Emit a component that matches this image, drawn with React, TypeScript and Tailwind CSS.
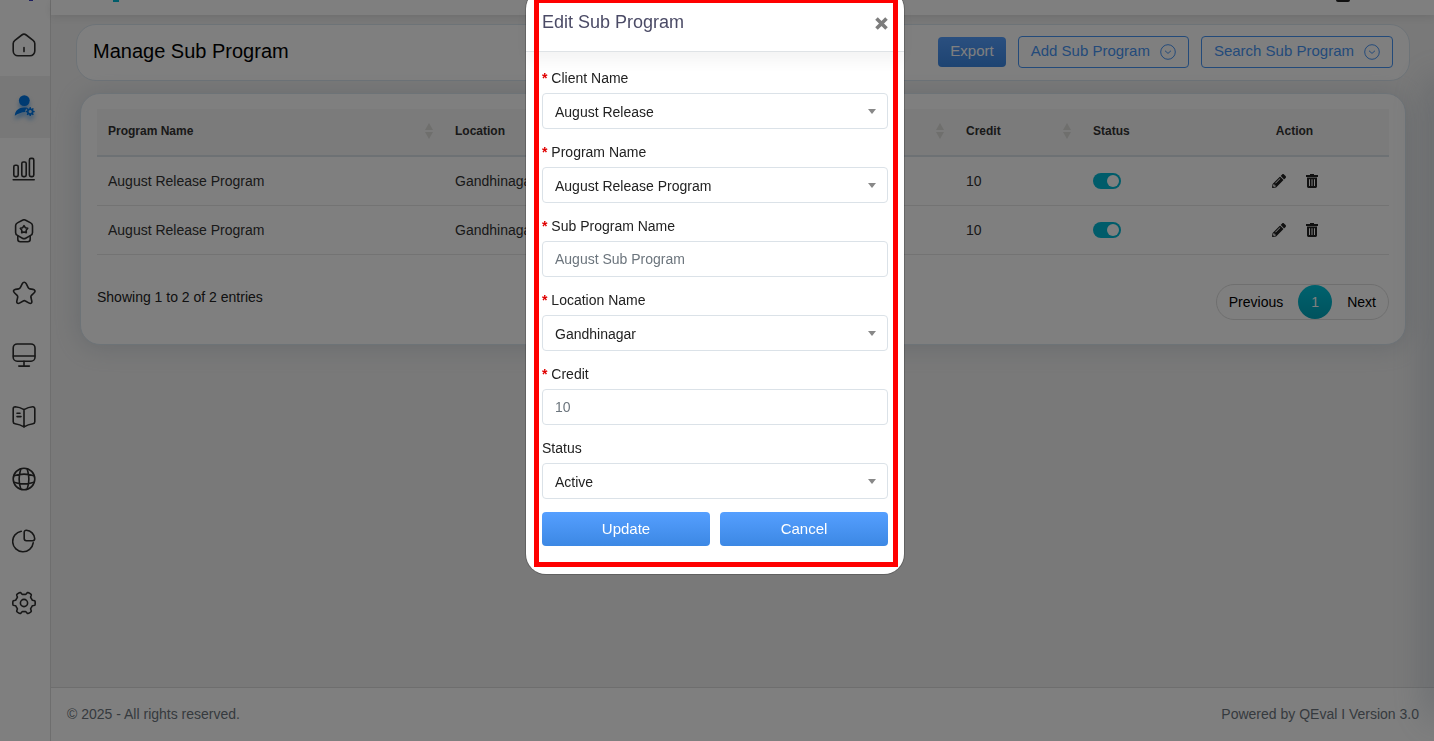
import type { ReactNode } from "react";
import { FaPencilAlt } from "react-icons/fa";

const ROWS = [
  { id: 1, program: "August Release Program", location: "Gandhinagar", credit: 10 },
  { id: 2, program: "August Release Program", location: "Gandhinagar", credit: 10 },
];

function gearPath(cx: number, cy: number, radius: number, depth: number, teeth: number) {
  const points: string[] = [];
  for (let i = 0; i < 120; i++) {
    const angle = (i / 120) * Math.PI * 2;
    const r = radius + depth * Math.tanh(3.4 * Math.cos(teeth * angle));
    points.push(`${(cx + r * Math.cos(angle)).toFixed(2)} ${(cy + r * Math.sin(angle)).toFixed(2)}`);
  }
  return `M${points.join("L")}z`;
}

const NAV_ITEMS: { label: string; active?: boolean; icon: ReactNode }[] = [
  {
    label: "Home",
    icon: (
      <path d="M1.2 10.6c0-1.5.5-2.4 1.7-3.3L9.8 2a3.6 3.6 0 0 1 4.4 0l6.9 5.3c1.2.9 1.7 1.8 1.7 3.3V18a4.8 4.8 0 0 1-4.8 4.8H6A4.8 4.8 0 0 1 1.2 18zM12 14.6v4" />
    ),
  },
  {
    label: "Users",
    active: true,
    icon: (
      <g stroke="none" fill="#0076e4">
        <circle cx="12.3" cy="5.6" r="5.4" />
        <path d="M2.8 20.8c.2-5.3 4-8.3 9.5-8.3 1.4 0 2.6.1 3.6.4-2.2.9-3 2.5-2.7 4.1-3.6.2-7.4 1.6-10.4 3.8z" />
        <path
          fillRule="evenodd"
          d={`${gearPath(18.2, 16.6, 3.9, 0.6, 8)}M19.8 16.6a1.6 1.6 0 1 0-3.2 0a1.6 1.6 0 1 0 3.2 0z`}
        />
      </g>
    ),
  },
  {
    label: "Reports",
    icon: (
      <>
        <rect x="1.8" y="8.2" width="4.4" height="11.4" rx="1.5" />
        <rect x="9.8" y="5" width="4.4" height="14.6" rx="1.5" />
        <rect x="17.4" y="1.4" width="4.4" height="18.2" rx="1.5" />
        <path d="M1.2 22.8h21" />
      </>
    ),
  },
  {
    label: "Awards",
    icon: (
      <>
        <path d="M10.4 1.2a3.5 3.5 0 0 1 3.3 0l5 2.700a3.300 3.300 0 0 1 1.800 3v6.500a3.300 3.300 0 0 1-1.800 3l-5 2.800a3.500 3.500 0 0 1-3.300 0l-5-2.800a3.300 3.300 0 0 1-1.800-3V6.900a3.300 3.300 0 0 1 1.800-3z" />
        <path d="m12 6.600 1.300 2.100 2.400.6-1.500 1.900.1 2.500L12 12.900l-2.300.8.1-2.500-1.500-1.900 2.400-.6z" />
        <path d="M5.8 17v3.3a2.5 2.5 0 0 0 2.5 2.5h7.4a2.5 2.5 0 0 0 2.5-2.5V17" />
      </>
    ),
  },
  {
    label: "Favourites",
    icon: (
      <path d="m14.2 2.7 2 4c.3.6 1 1.1 1.6 1.2l3.2.5c2.2.4 2.6 1.9 1.2 3.3l-2.7 2.7c-.5.5-.7 1.3-.6 1.900l.8 3.400c.6 2.500-.8 3.500-3 2.200l-3.300-1.900c-.6-.4-1.600-.4-2.200 0l-3.300 1.900c-2.200 1.300-3.600.3-3-2.200l.8-3.400c.1-.6-.1-1.400-.6-1.900l-2.700-2.700C.9 10.300 1.300 8.800 3.500 8.400l3.200-.5c.6-.1 1.300-.6 1.600-1.200l2-4c1-2 2.800-2 3.900 0z" />
    ),
  },
  {
    label: "Monitor",
    icon: (
      <>
        <rect x="1.2" y="1" width="21.8" height="17.2" rx="4" />
        <path d="M1.4 13h21.4M12 18.2v4.9M6.8 23.1h10.6" />
      </>
    ),
  },
  {
    label: "Library",
    icon: (
      <>
        <path d="M12 4.6v17.6M12 4.6C9.8 3.3 6.3 2 3.3 1.8c-1.2 0-2.1.8-2.1 2v12.9c0 1 .8 1.9 1.8 2 3 .4 6.600 1.700 9 3.200 2.400-1.500 6-2.800 9-3.200 1-.1 1.800-1 1.800-2V3.800c0-1.200-.9-2.100-2.100-2C17.700 2 14.200 3.300 12 4.600z" />
        <path d="M5 8.2h3M5 11.6h4" />
      </>
    ),
  },
  {
    label: "Network",
    icon: (
      <>
        <circle cx="12" cy="12" r="10.8" />
        <path d="M8.800 1.900a32 32 0 0 0 0 20.200M15.200 1.900a32 32 0 0 1 0 20.200M1.900 8.800a32 32 0 0 1 20.200 0M1.900 15.200a32 32 0 0 0 20.200 0" />
      </>
    ),
  },
  {
    label: "Analytics",
    icon: (
      <>
        <path d="M9.2 2.3a10.3 10.3 0 1 0 12 11.5" />
        <path d="M12.2 3.2c0-1.2.9-2.1 2.2-2a9 9 0 0 1 8.3 8.3c.1 1.3-.8 2.300-2 2.300h-6.300c-1.200 0-2.200-1-2.200-2.200z" />
      </>
    ),
  },
  {
    label: "Settings",
    icon: (
      <>
        <circle cx="12" cy="12" r="3.6" />
        <path d={gearPath(12, 12, 9.9, 1.3, 6)} />
      </>
    ),
  },
];

function Sidebar() {
  return (
    <nav className="w-[51px] shrink-0 border-r border-[#dcdcdc] bg-white">
      <div className="flex h-[14px] justify-center overflow-hidden pl-3">
        <span className="h-px w-1 bg-[#3b3bc0]" />
      </div>
      {NAV_ITEMS.map((item) => (
        <a
          key={item.label}
          href="#"
          aria-label={item.label}
          className={`flex h-[62px] items-center pl-3 ${item.active ? "bg-[#f0f0f0]" : ""}`}
        >
          <svg
            viewBox="0 0 24 24"
            fill="none"
            stroke="#2e2e2e"
            strokeWidth="1.6"
            strokeLinecap="round"
            strokeLinejoin="round"
            className={`size-6 ${item.active ? "drop-shadow-[0_4px_2px_#0076e480]" : ""}`}
          >
            {item.icon}
          </svg>
        </a>
      ))}
    </nav>
  );
}

function ChevronCircle() {
  return (
    <svg viewBox="0 0 16 16" fill="none" stroke="currentColor" className="size-4">
      <circle cx="8" cy="8" r="7.3" />
      <path d="m5.3 7 2.7 2.4L10.7 7" strokeLinecap="round" strokeLinejoin="round" />
    </svg>
  );
}

function SortIcon() {
  return (
    <svg viewBox="0 0 8 16" fill="#dededa" className="h-4 w-2">
      <path d="M4 0l4 7H0zM4 16l4-7H0z" />
    </svg>
  );
}

function TrashIcon() {
  return (
    <svg viewBox="0 0 12 14" fill="#222" className="h-[14px] w-3">
      <path d="M4 0h4v1h4v2H0V1h4z" />
      <path
        fillRule="evenodd"
        d="M1 3.6h10V12.600a1.400 1.400 0 0 1-1.400 1.400H2.400A1.400 1.400 0 0 1 1 12.600zM3 5.200v6.800h1V5.200zM5.500 5.200v6.800h1V5.200zM8 5.200v6.800h1V5.200z"
      />
    </svg>
  );
}

function SortHeader({ children }: { children: ReactNode }) {
  return (
    <th className="pr-[11px] pb-[2px] pl-[11px] text-left">
      <div className="flex items-center justify-between">
        {children}
        <SortIcon />
      </div>
    </th>
  );
}

function PageHeader() {
  return (
    <div className="mt-[9px] mr-6 ml-[25px] flex h-[57px] items-center gap-3 rounded-[20px] border border-[#dbe6ef] bg-white px-4 pb-[2px]">
      <h1 className="mr-auto pb-[2px] text-xl text-black">Manage Sub Program</h1>
      <button className="h-[30px] rounded bg-linear-to-b from-[#559fff] to-[#3c88e4] px-3 text-[15px] text-white">
        Export
      </button>
      <button className="flex h-8 items-center gap-[10px] rounded border border-[#4795f5] px-3 text-[15px] text-[#4795f5]">
        Add Sub Program
        <ChevronCircle />
      </button>
      <button className="flex h-8 items-center gap-[10px] rounded border border-[#4795f5] px-3 text-[15px] text-[#4795f5]">
        Search Sub Program
        <ChevronCircle />
      </button>
    </div>
  );
}

function ProgramTable() {
  return (
    <section className="mt-3 mr-7 ml-[29px] rounded-[20px] border border-[#dbe6ef] bg-white px-4 pt-[15px] pb-6 shadow-[0_2px_24px_#8898aa50]">
      <table className="w-full table-fixed border-collapse">
        <colgroup>
          <col className="w-[347px]" />
          <col />
          <col className="w-[127px]" />
          <col className="w-[118px]" />
          <col className="w-[189px]" />
        </colgroup>
        <thead>
          <tr className="h-[47px] border-b-2 border-[#dbe2e8] bg-[#f6f6f6] text-xs text-[#333]">
            <SortHeader>Program Name</SortHeader>
            <SortHeader>Location</SortHeader>
            <SortHeader>Credit</SortHeader>
            <th className="pb-[2px] pl-[11px] text-left">Status</th>
            <th className="pb-[2px] text-center">Action</th>
          </tr>
        </thead>
        <tbody>
          {ROWS.map((row) => (
            <tr key={row.id} className="h-[49px] border-b border-[#e6e6e6] text-sm text-[#333]">
              <td className="pl-[11px]">{row.program}</td>
              <td className="pl-[11px]">{row.location}</td>
              <td className="pl-[11px]">{row.credit}</td>
              <td className="pl-[11px]">
                <label className="flex w-7">
                  <input type="checkbox" defaultChecked aria-label="Status" className="peer sr-only" />
                  <span className="flex h-4 w-7 items-center justify-end rounded-full bg-[#00b8d4] px-[2px]">
                    <span className="size-3 rounded-full bg-white" />
                  </span>
                </label>
              </td>
              <td>
                <div className="flex items-center justify-center gap-5 text-[#222]">
                  <button aria-label="Edit">
                    <FaPencilAlt className="size-[14px]" />
                  </button>
                  <button aria-label="Delete">
                    <TrashIcon />
                  </button>
                </div>
              </td>
            </tr>
          ))}
        </tbody>
      </table>
      <div className="mt-[29px] flex items-start justify-between text-sm">
        <p className="pt-[3px] text-[#222]">Showing 1 to 2 of 2 entries</p>
        <div className="flex h-9 items-center rounded-full border border-[#dedede] px-3 text-black">
          <button>Previous</button>
          <button className="mx-[15px] size-[34px] rounded-full bg-linear-to-b from-[#00c4dc] to-[#00a5bb] text-white">
            1
          </button>
          <button>Next</button>
        </div>
      </div>
    </section>
  );
}

function FieldLabel({ id, label, required }: { id: string; label: string; required?: boolean }) {
  return (
    <label htmlFor={id} className="mb-[5px] block text-sm leading-5 text-[#222]">
      {required && <span className="font-bold text-[#e00000]">* </span>}
      {label}
    </label>
  );
}

function SelectField({ id, label, value, required }: { id: string; label: string; value: string; required?: boolean }) {
  return (
    <div>
      <FieldLabel id={id} label={label} required={required} />
      <div className="relative">
        <select
          id={id}
          className="block h-9 w-full appearance-none rounded border border-[#dbe2e8] bg-white px-3 pt-[2px] text-sm text-[#222]"
        >
          <option>{value}</option>
        </select>
        <svg viewBox="0 0 8 5" fill="#888" className="pointer-events-none absolute top-4 right-3 h-[5px] w-2">
          <path d="M0 0h8L4 5z" />
        </svg>
      </div>
    </div>
  );
}

function TextField({ id, label, value }: { id: string; label: string; value: string }) {
  return (
    <div>
      <FieldLabel id={id} label={label} required />
      <input
        id={id}
        defaultValue={value}
        className="block h-9 w-full rounded border border-[#dbe2e8] bg-white px-3 text-sm text-[#6c757d]"
      />
    </div>
  );
}

function EditModal() {
  return (
    <div className="fixed inset-0 z-20 flex items-start justify-center overflow-hidden bg-black/50 pr-1">
      <div
        role="dialog"
        aria-labelledby="modal-title"
        className="relative -mt-[11px] w-[378px] rounded-[20px] bg-white shadow-[0_0_0_1px_#00000033]"
      >
        <div className="flex h-[63px] items-center justify-between rounded-t-[20px] border-b border-[#dfe3e6] px-4 pt-[3px] shadow-[0_8px_16px_#0000000d]">
          <h2 id="modal-title" className="text-lg text-[#4b4b66]">
            Edit Sub Program
          </h2>
          <button aria-label="Close" className="pt-1">
            <svg viewBox="0 0 13 13" stroke="#7d7d7d" strokeWidth="3.6" className="size-[13px]">
              <path d="M1.5 1.5l10 10M11.5 1.5l-10 10" />
            </svg>
          </button>
        </div>
        <form className="flex flex-col gap-[13px] px-4 pt-4 pb-7">
          <SelectField id="client" label="Client Name" value="August Release" required />
          <SelectField id="program" label="Program Name" value="August Release Program" required />
          <TextField id="sub-program" label="Sub Program Name" value="August Sub Program" />
          <SelectField id="location" label="Location Name" value="Gandhinagar" required />
          <TextField id="credit" label="Credit" value="10" />
          <SelectField id="status" label="Status" value="Active" />
          <div className="grid grid-cols-2 gap-[10px]">
            <button type="button" className="h-[34px] rounded bg-linear-to-b from-[#559fff] to-[#3c88e4] text-[15px] text-white">
              Update
            </button>
            <button type="button" className="h-[34px] rounded bg-linear-to-b from-[#559fff] to-[#3c88e4] text-[15px] text-white">
              Cancel
            </button>
          </div>
        </form>
        <div className="pointer-events-none absolute top-[9px] right-[6px] bottom-[7px] left-2 border-5 border-[#ff0000]" />
      </div>
    </div>
  );
}

export default function App() {
  return (
    <div className="flex min-h-screen bg-[#f2f2f2] font-['Liberation_Sans',Arial,sans-serif]">
      <Sidebar />
      <div className="flex min-w-0 grow flex-col">
        <header className="flex h-[15px] items-start justify-between bg-white pr-[84px] pl-[62px] shadow-[0_2px_8px_#00000018]">
          <span className="h-[2px] w-[6px] bg-[#00b8d4]" />
          <span className="h-[2px] w-[14px] rounded-b-full bg-[#222]" />
        </header>
        <main className="grow">
          <PageHeader />
          <ProgramTable />
        </main>
        <footer className="flex h-[54px] items-center justify-between border-t border-[#dcdcdc] bg-white pr-[15px] pb-[2px] pl-4 text-sm text-[#6c757d]">
          <p>© 2025 - All rights reserved.</p>
          <p>Powered by QEval I Version 3.0</p>
        </footer>
      </div>
      {/* shadow cast by the closed right drawer */}
      <aside className="fixed top-[90px] -right-3 bottom-8 z-10 w-2 shadow-[0_0_36px_10px_#8898aa66]" />
      <EditModal />
    </div>
  );
}
